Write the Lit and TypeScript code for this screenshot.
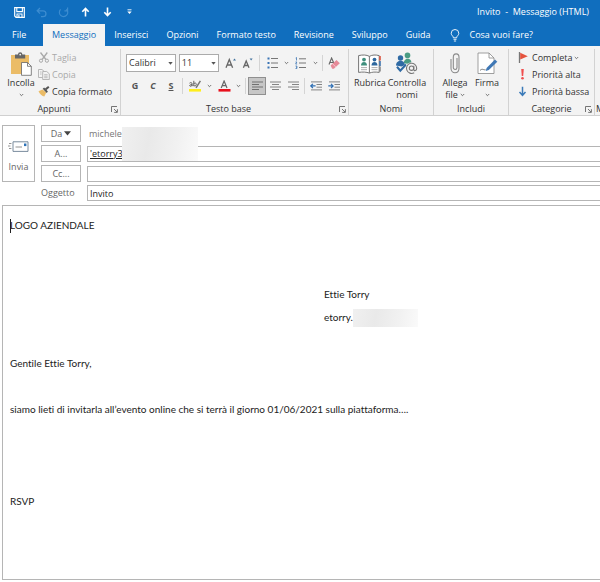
import { LitElement, html, css, svg, nothing, TemplateResult } from "lit";
import { customElement } from "lit/decorators.js";
import { classMap } from "lit/directives/class-map.js";

const icon = (w: number, h: number, body: unknown) =>
  html`<svg width=${w} height=${h} viewBox="0 0 ${w} ${h}" fill="none" aria-hidden="true">${body}</svg>`;

const chevron = icon(5, 4, svg`<path d="M.8 1l1.7 1.7L4.2 1" stroke="#555" stroke-width=".8"/>`);
const launcher = icon(7, 7, svg`<path d="M.5 6V.5H6M3 3l3 3M6.4 3.2v3.2H3.2" stroke="#666" stroke-width=".9"/>`);

const icons = {
  save: icon(11, 11, svg`<path d="M.7.7h9.6v9.6H2L.7 9z" stroke="#fff" stroke-width="1.2"/><path d="M2.800.8v3.800h5.600V.8M3 10V7h5v3" stroke="#fff" stroke-width="1.1"/><path d="M4.300 8h1.200v2H4.300z" fill="#fff"/>`),
  undo: icon(11, 11, svg`<path d="M4 1L1.2 3.8 4 6.6M1.5 3.8H7a2.9 2.9 0 010 5.9H5" stroke="#3c8cd0" stroke-width="1.3"/>`),
  redo: icon(11, 11, svg`<path d="M8.3 2.2A4.2 4.2 0 112.6 2.4M9.6.6v3.2H6.4" stroke="#3c8cd0" stroke-width="1.2"/>`),
  up: icon(9, 10, svg`<path d="M4.5 9.5V1.5M1.3 4.8l3.2-3.4 3.2 3.4" stroke="#fff" stroke-width="1.6"/>`),
  down: icon(9, 10, svg`<path d="M4.5.5v8M1.3 5.2l3.2 3.4 3.2-3.4" stroke="#fff" stroke-width="1.6"/>`),
  more: icon(5, 6, svg`<path d="M.5.8h4" stroke="#fff" stroke-width=".9"/><path d="M.3 2.6h4.4L2.5 5z" fill="#fff"/>`),
  bulb: icon(10, 13, svg`<path d="M3.4 8.8C3.4 7 1.2 6.5 1.2 4.3a3.8 3.8 0 017.6 0c0 2.2-2.2 2.7-2.2 4.5zM3.5 10.3h3M3.9 12h2.2" stroke="#fff" stroke-width=".9"/>`),
  paste: icon(22, 24, svg`<path d="M1 3h18v19H1z" fill="#ebbc67"/><path d="M5 2.4h3a2.2 2.2 0 014.4 0h2.8v4H5z" fill="#666"/><circle cx="10.2" cy="2.6" r=".9" fill="#f3f3f3"/><path d="M11.5 10.5h6l3.8 3.8v9h-9.800z" fill="#fff" stroke="#666" stroke-width=".8"/><path d="M17.5 10.5v3.8h3.8" stroke="#666" stroke-width=".8"/>`),
  cut: icon(12, 11, svg`<path d="M2.500.5l5.400 7M9.300.5L4.100 7.500" stroke="#a9a9a9" stroke-width="1.3"/><circle cx="3" cy="8.7" r="1.6" stroke="#a9a9a9"/><circle cx="8.900" cy="8.7" r="1.6" stroke="#a9a9a9"/>`),
  copy: icon(12, 11, svg`<path d="M4.5 8.5h-4v-8H4L6 2.3M4.7 2.5h4l2.6 2.3v5.7H4.7z" stroke="#b0b0b0" stroke-width=".9"/><path d="M2 3h1.6M2 5h1.6M6.2 5.7h3.4M6.2 7.2h3.4M6.2 8.7h3.4" stroke="#b0b0b0" stroke-width=".8"/>`),
  brush: icon(12, 11, svg`<path d="M.5 5.2l4-1.6 3.8 3-2 3.9C4 10 1.8 8 .5 5.2z" fill="#ebbc67"/><path d="M4.7 2.8l1.4-1.2 3.8 4-1.2 1.5z" fill="#555"/><path d="M7.6 3.4L10.8.8" stroke="#555" stroke-width="2"/>`),
  grow: icon(12, 12, svg`<path d="M1 10.8L4.3 2.500l3.300 8.300M2.200 8h4.200" stroke="#666" stroke-width="1.3"/><path d="M8 3.400h3L9.500 1.500z" fill="#41719c"/>`),
  shrink: icon(12, 12, svg`<path d="M1.400 10.800L4.200 4l2.800 6.800M2.400 8.500h3.600" stroke="#666" stroke-width="1.3"/><path d="M7.600 1.500h3L9.100 3.400z" fill="#41719c"/>`),
  bullets: icon(11, 12, svg`<path d="M.5 1.5h2M.5 6h2M.5 10.5h2" stroke="#3b75b5" stroke-width="2"/><path d="M4 1.5h7M4 6h7M4 10.5h7" stroke="#777"/>`),
  numbers: icon(12, 12, svg`<path d="M.7 1l.8-.5v3M.5 5h1.4L.6 7h1.5M.5 9h1.4v2.5H.5M1 10.2h1" stroke="#3b75b5" stroke-width=".8"/><path d="M4 1.8h7M4 6h7M4 10.5h7" stroke="#777"/>`),
  eraser: icon(12, 12, svg`<path d="M1 7.500L3.600 1l2.600 6M2 5.500h3" stroke="#666" stroke-width="1.1"/><path d="M2.600 8.600l5.900-5.600 3.300 3.200-5.900 5.600H4.200z" fill="#e68a98"/><path d="M4.600 6.800l3.100 3.100" stroke="#f8dfe3" stroke-width=".7"/>`),
  highlight: icon(13, 12, svg`<path d="M.5 3.200c1-1 2.600-.7 2.600.6v2.400M3 4.600C.4 4.400.2 6.300 1.400 6.300c.8 0 1.600-.6 1.600-1.200M4.800.8v5.400M4.800 4c.8-1.800 2.900-1 2.400.8-.3 1.400-1.900 1.600-2.400.5" stroke="#555" stroke-width=".9"/><path d="M11.400.8L7 7.800" stroke="#777" stroke-width="1.5"/><path d="M0 9h12v2.600H0z" fill="#ffee1c"/>`),
  color: icon(13, 12, svg`<path d="M3.200 8l2.900-7L9 8M4.300 5.600h3.700" stroke="#666" stroke-width="1.2"/><path d="M.5 9h12v2.600H.5z" fill="#e8101c"/>`),
  left: icon(11, 10, svg`<path d="M0 1h11M0 3.5h7M0 6h11M0 8.5h7" stroke="#666" stroke-width=".9"/>`),
  center: icon(11, 10, svg`<path d="M0 1h11M2 3.5h7M0 6h11M2 8.5h7" stroke="#777" stroke-width=".9"/>`),
  right: icon(11, 10, svg`<path d="M0 1h11M4 3.5h7M0 6h11M4 8.5h7" stroke="#777" stroke-width=".9"/>`),
  outdent: icon(12, 11, svg`<path d="M1 .9h11M6.5 3.5H12M6.5 6.2H12M1 8.9h11" stroke="#777" stroke-width=".9"/><path d="M5.6 4.9H.9M2.9 2.8L.8 4.9 2.9 7" stroke="#2f6fb3" stroke-width="1.2"/>`),
  indent: icon(12, 11, svg`<path d="M1 .9h11M6.5 3.5H12M6.5 6.2H12M1 8.9h11" stroke="#777" stroke-width=".9"/><path d="M.3 4.9H5M3 2.8l2.1 2.1L3 7" stroke="#2f6fb3" stroke-width="1.2"/>`),
  book: icon(23, 20, svg`<path d="M.6 1.6c4-.9 8-.9 10.8.8 2.8-1.700 6.200-1.700 9.800-.8v16.800c-4-.6-7-.5-9.800.7-3-1.200-6.800-1.300-10.800-.7z" fill="#fff" stroke="#666" stroke-width=".9"/><path d="M11.400 2.400v16.500" stroke="#666" stroke-width=".9"/><path d="M21.200 2h1.600v4.500h-1.600z" fill="#d9533f"/><path d="M21.200 7h1.600v5h-1.600z" fill="#3f74ad"/><path d="M21.200 12.500h1.600v5h-1.600z" fill="#8a8a8a"/><circle cx="6" cy="5.600" r="1.900" fill="#3f8f7d"/><path d="M3 11.400c0-4.600 6-4.600 6 0z" fill="#3f8f7d"/><circle cx="16.500" cy="5.600" r="1.900" fill="#2d679e"/><path d="M13.500 11.400c0-4.600 6-4.600 6 0z" fill="#2d679e"/><path d="M3 13.600h6M3 15.700h6M13.500 13.600h6M13.500 15.700h6" stroke="#999" stroke-width=".8"/>`),
  check: icon(23, 23, svg`<circle cx="12.500" cy="3.400" r="2.800" fill="#4a9c84"/><path d="M8.800 11.300c-.3-6 7.800-6 7.600-.6l-2 1.300z" fill="#4a9c84"/><circle cx="5.500" cy="6" r="2.700" fill="#2f6aa4"/><path d="M1 13.400c0-6.200 8.800-6.200 8.800-.5l-3.200 1.600z" fill="#2f6aa4"/><path d="M2 14.800l3.300 3.900L11 12.500" stroke="#2f6aa4" stroke-width="2.100"/><circle cx="16.600" cy="16.200" r="6" fill="#f3f3f3"/><path d="M18.800 13.700v3.700c0 2 2.900 1.500 2.900-1.200a5.100 5.100 0 10-2.500 4.500" stroke="#777" stroke-width="1.100"/><circle cx="16.500" cy="16.200" r="2.200" stroke="#777" stroke-width="1.100"/>`),
  clip: icon(10, 21, svg`<path d="M7 5v9.500c0 2.600-3.700 2.600-3.700 0V4.200c0-4.400 5.700-4.400 5.700 0v11c0 6-8 6-8 0V6" stroke="#8a8a8a" stroke-width="1.100"/>`),
  sign: icon(21, 23, svg`<path d="M1 1h11l5 5v15.500H1z" fill="#fff" stroke="#888" stroke-width=".8"/><path d="M12 1v5h5" stroke="#888" stroke-width=".8"/><path d="M3 18.500c2.300-2.500 3.500-.2 5.500-.8" stroke="#666" stroke-width=".9"/><path d="M18 7.500l2.300 2.200-8.500 8.400-3.100 1 .9-3.200z" fill="#3f78b5"/>`),
  flag: icon(12, 11, svg`<path d="M1.500 0v11" stroke="#777" stroke-width="1.300"/><path d="M2.200.8l7.600 3.400-7.600 3.400z" fill="#e5533d"/>`),
  high: icon(12, 11, svg`<path d="M3.200 0h2.600L5.200 7H3.800z" fill="#f04f4f"/><circle cx="4.500" cy="9.300" r="1.300" fill="#f04f4f"/>`),
  low: icon(12, 11, svg`<path d="M4.500.8v8.400M1.500 6l3 3.300L7.500 6" stroke="#3b7ab8" stroke-width="1.500"/>`),
  send: icon(21, 12, svg`<path d="M5 .8h15v9.600H5z" fill="#fff" stroke="#6b7f92" stroke-width=".9"/><path d="M16 2.500h2.400v2.600H16z" fill="#2b72b8"/><path d="M7.500 6h6.500" stroke="#777" stroke-width=".8"/><path d="M1 2.500h3M0 5h3M1 7.500h3" stroke="#888" stroke-width=".9" stroke-dasharray="2 .6"/>`),
  tri: icon(7, 5, svg`<path d="M0 .3h7L3.500 4.500z" fill="#444"/>`),
  caret: icon(5, 3, svg`<path d="M.3 0h4.400L2.500 2.700z" fill="#555"/>`),
};

@customElement("app-root")
export class AppRoot extends LitElement {
  static styles = css`
    :host { display: flex; flex-direction: column; min-height: 100vh; background: #fff; color: #333; overflow: hidden;
      font: 9px/12px "Open Sans", "Noto Sans", sans-serif; }
    * { box-sizing: border-box; }
    svg { display: block; flex: none; }
    button, input, select { font: inherit; color: inherit; margin: 0; padding: 0; border: 0; background: none; border-radius: 0; outline: 0; }
    button { display: flex; align-items: center; justify-content: center; white-space: nowrap; }
    .title { display: flex; align-items: center; height: 24px; padding: 0 11px 0 8px; background: #106ebe; color: #fff; }
    .title button { width: 22px; height: 22px; flex: none; }
    .title h1 { margin: 0 0 0 auto; font: inherit; white-space: pre; }
    .tabs { display: flex; height: 22px; background: #106ebe; color: #fff; }
    .tab { flex: none; color: #fff; text-decoration: none; line-height: 22px; padding: 0 9px; white-space: nowrap; }
    .tab.file { width: 43px; padding: 0 12px; }
    .tab.active { background: #f3f3f3; color: #106ebe; }
    .tell { gap: 10px; color: #fff; padding-left: 10px; }
    .ribbon { display: flex; padding-top: 3px; background: #f3f3f3; border-bottom: 1px solid #d0d0d0; overflow: hidden; }
    .group { flex: none; position: relative; display: flex; flex-direction: column; border-right: 1px solid #d2d2d2; }
    .group:last-child { border: 0; padding-left: 1px; }
    .body { display: flex; height: 54px; padding: 0 5px; }
    .label { text-align: center; padding: 0 12px; }
    .launch { position: absolute; right: 2px; bottom: 2px; }
    .g-clip { width: 121px; } .g-text { width: 228px; } .g-names { width: 85px; } .g-inc { width: 75px; } .g-cat { width: 86px; }
    .g-clip .label { padding: 0 24px 0 12px; }
    .g-text .label { padding: 0 24px 0 12px; }
    .big { flex-direction: column; justify-content: flex-start; white-space: normal; width: 32px; padding-top: 1px; }
    .big.wide { width: 44px; }
    .big .pic { display: flex; align-items: center; height: 27px; flex: none; }
    .big .chev { display: flex; align-items: center; height: 12px; }
    .big .row { display: flex; align-items: center; gap: 2px; }
    .small { display: flex; flex-direction: column; align-items: flex-start; padding-left: 1px; }
    .g-cat .small { padding-left: 4px; }
    .small button { height: 17px; gap: 2px; }
    .small .off { color: #a9a9a9; }
    .g-text .body { flex-direction: column; gap: 5px; padding-top: 5px; }
    .tools { display: flex; align-items: center; height: 18px; }
    .tools button { width: 18px; height: 18px; }
    .tools .w { width: 20px; } .tools .c { width: 9px; }
    .tools .on { background: #c6c6c6; border: 1px solid #8f8f8f; }
    .sep { width: 1px; height: 16px; background: #d4d4d4; margin: 0 2px; }
    .combo { position: relative; height: 18px; width: 50px; margin-right: 3px; }
    .combo.n { width: 40px; }
    .combo select { appearance: none; width: 100%; height: 18px; border: 1px solid #ababab; background: #fff; padding: 0 2px; }
    .combo svg { position: absolute; right: 3px; top: 8px; pointer-events: none; }
    .g, .c2, .s { font-weight: 700; color: #555; }
    .c2 { font-style: italic; } .s { text-decoration: underline; }
    .head { display: flex; gap: 6px; padding: 9px 0 4px 2px; color: #666; }
    .send { width: 33px; height: 57px; flex-direction: column; gap: 8px; padding-top: 6px; border: 1px solid #b5b5b5; flex: none; }
    .fields { position: relative; flex: 1; display: grid; grid-template-columns: 40px 1fr; column-gap: 6px; row-gap: 3px; }
    .fields button { height: 17px; border: 1px solid #b5b5b5; gap: 2px; }
    .fields input { width: 100%; min-width: 0; height: 16px; align-self: center; padding: 0 2px; border: 1px solid #b5b5b5; border-right: 0; color: #222; }
    .fields .from { border-color: transparent; padding: 0 1px; color: #777; }
    .fields .to { text-decoration: underline; }
    .fields label { line-height: 16px; }
    .veil { background: linear-gradient(100deg, #f0f0f0, #e9e9e9 35%, #f1f1f1 70%, #fafafa); }
    .fields .veil { position: absolute; left: 81px; top: 2px; width: 76px; height: 34px; }
    .mail { flex: 1; margin: 0 0 2px 2px; border: 1px solid #b5b5b5; border-right: 0; padding: 8px 7px; color: #222;
      font: 10px/23px Lato, "Noto Sans", sans-serif; font-variant-ligatures: none; outline: 0; }
    .mail p { margin: 0; min-height: 23px; }
    .mail .addr { padding-left: 314px; display: flex; align-items: center; }
    .mail .veil { width: 65px; height: 18px; }
    .cursor { display: inline-block; width: 1px; height: 14px; margin-right: -1px; background: #222; vertical-align: middle; }
  `;

  private tool(label: string, body: unknown, cls = "") {
    return html`<button class=${cls} aria-label=${label}>${body}</button>`;
  }

  private line(pic: TemplateResult, text: string, off = false, more = false) {
    return html`<button class=${classMap({ off })}>${pic}<span>${text}</span>${more ? chevron : nothing}</button>`;
  }

  private big(pic: TemplateResult, text: string, rest: unknown, wide = false) {
    return html`<button class=${classMap({ big: true, wide })}><span class="pic">${pic}</span><span>${text}</span>${rest}</button>`;
  }

  private group(cls: string, name: string, body: unknown, launch = true) {
    return html`<section class="group ${cls}">
      <div class="body">${body}</div>
      <div class="label">${name}</div>
      ${launch ? html`<button class="launch" aria-label="Altre opzioni ${name}">${launcher}</button>` : nothing}
    </section>`;
  }

  render() {
    const chev = html`<span class="chev">${chevron}</span>`;
    const sep = html`<span class="sep"></span>`;
    return html`
      <header class="title">
        ${this.tool("Salva", icons.save)}${this.tool("Annulla", icons.undo)}${this.tool("Ripeti", icons.redo)}
        ${this.tool("Precedente", icons.up)}${this.tool("Successivo", icons.down)}${this.tool("Personalizza", icons.more)}
        <h1>Invito  -  Messaggio (HTML)</h1>
      </header>
      <nav class="tabs">
        <a class="tab file" href="#file">File</a>
        <a class="tab active" href="#messaggio">Messaggio</a>
        ${["Inserisci", "Opzioni", "Formato testo", "Revisione", "Sviluppo", "Guida"].map(
          (t) => html`<a class="tab" href="#${t.toLowerCase().replace(" ", "-")}">${t}</a>`)}
        <button class="tell">${icons.bulb}<span>Cosa vuoi fare?</span></button>
      </nav>
      <div class="ribbon">
        ${this.group("g-clip", "Appunti", html`
          ${this.big(icons.paste, "Incolla", chev)}
          <div class="small">${this.line(icons.cut, "Taglia", true)}${this.line(icons.copy, "Copia", true)}${this.line(icons.brush, "Copia formato")}</div>`)}
        ${this.group("g-text", "Testo base", html`
          <div class="tools">
            <span class="combo"><select aria-label="Tipo di carattere"><option>Calibri</option></select>${icons.caret}</span>
            <span class="combo n"><select aria-label="Dimensione carattere"><option>11</option></select>${icons.caret}</span>
            ${this.tool("Aumenta dimensione", icons.grow)}${this.tool("Riduci dimensione", icons.shrink)}${sep}
            ${this.tool("Elenco puntato", icons.bullets, "w")}${this.tool("Opzioni elenco puntato", chevron, "c")}
            ${this.tool("Elenco numerato", icons.numbers, "w")}${this.tool("Opzioni elenco numerato", chevron, "c")}${sep}
            ${this.tool("Cancella formattazione", icons.eraser)}
          </div>
          <div class="tools">
            ${this.tool("Grassetto", "G", "g")}${this.tool("Corsivo", "C", "c2")}${this.tool("Sottolineato", "S", "s")}${sep}
            ${this.tool("Evidenziatore", icons.highlight, "w")}${this.tool("Opzioni evidenziatore", chevron, "c")}
            ${this.tool("Colore carattere", icons.color, "w")}${this.tool("Opzioni colore", chevron, "c")}${sep}
            ${this.tool("Allinea a sinistra", icons.left, "on")}${this.tool("Centra", icons.center)}${this.tool("Allinea a destra", icons.right)}${sep}
            ${this.tool("Riduci rientro", icons.outdent)}${this.tool("Aumenta rientro", icons.indent)}
          </div>`)}
        ${this.group("g-names", "Nomi", html`
          ${this.big(icons.book, "Rubrica", nothing)}${this.big(icons.check, "Controlla", html`<span>nomi</span>`, true)}`, false)}
        ${this.group("g-inc", "Includi", html`
          ${this.big(icons.clip, "Allega", html`<span class="row">file ${chevron}</span>`)}${this.big(icons.sign, "Firma", chev)}`, false)}
        ${this.group("g-cat", "Categorie", html`
          <div class="small">${this.line(icons.flag, "Completa", false, true)}${this.line(icons.high, "Priorità alta")}${this.line(icons.low, "Priorità bassa")}</div>`)}
        <section class="group"><div class="body"></div><div>M</div></section>
      </div>
      <form class="head" @submit=${(e: Event) => e.preventDefault()}>
        <button class="send">${icons.send}<span>Invia</span></button>
        <div class="fields">
          <button type="button">Da ${icons.tri}</button><input class="from" aria-label="Da" value="michele" />
          <button type="button">A...</button><input class="to" aria-label="A" value="'etorry3" />
          <button type="button">Cc...</button><input aria-label="Cc" />
          <label for="subject">Oggetto</label><input id="subject" value="Invito" />
          <span class="veil"></span>
        </div>
      </form>
      <main class="mail">
        <p><span class="cursor"></span>LOGO AZIENDALE</p>
        <p></p><p></p>
        <p class="addr">Ettie Torry</p>
        <p class="addr">etorry.<span class="veil"></span></p>
        <p></p>
        <p>Gentile Ettie Torry,</p>
        <p></p>
        <p>siamo lieti di invitarla all’evento online che si terrà il giorno 01/06/2021 sulla piattaforma….</p>
        <p></p><p></p><p></p>
        <p>RSVP</p>
      </main>
    `;
  }
}
